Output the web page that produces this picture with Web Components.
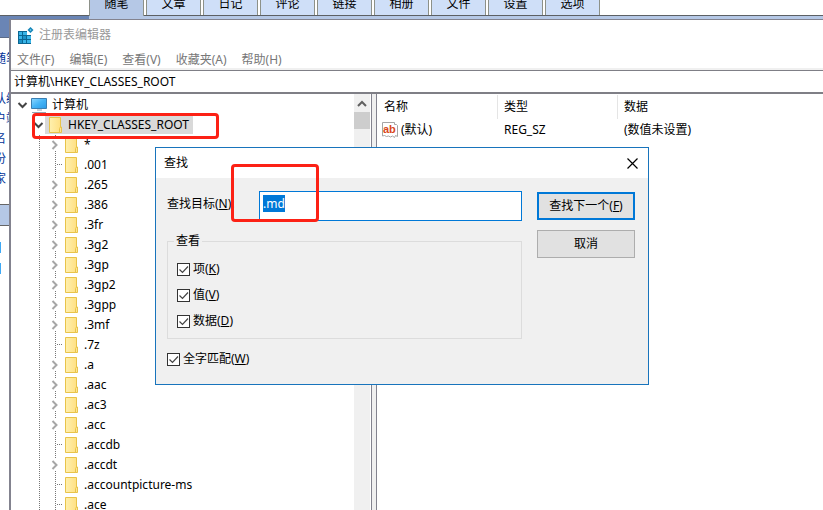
<!DOCTYPE html>
<html lang="zh-CN">
<head>
<meta charset="utf-8">
<title>注册表编辑器</title>
<style>
    html, body {
        height: 100%;
    }
    body {
        margin: 0;
        position: relative;
        overflow: hidden;
        background: #fff;
        color: #000;
        font: 12px/20px "Noto Sans", "Noto Sans CJK SC", sans-serif;
    }
</style>
</head>
<body>
<blog-page></blog-page>
<registry-window></registry-window>
<find-dialog></find-dialog>

<script>
const escapeHtml = (text) => text.replace(/&/g, '&amp;').replace(/</g, '&lt;');

class BlogPage extends HTMLElement {
    constructor() {
        super();
        this.attachShadow({ mode: 'open' });
    }

    connectedCallback() {
        const tabs = ['随笔', '文章', '日记', '评论', '链接', '相册', '文件', '设置', '选项'];
        const links = ['随笔', '', '认编', '户端', '名', '份', '家'];
        this.shadowRoot.innerHTML = `
            <style>
                :host {
                    display: block;
                    height: 100%;
                }
                nav {
                    display: flex;
                    gap: 2px;
                    height: 15px;
                    padding-left: 89px;
                    border-bottom: 1px solid #5c6064;
                }
                nav a {
                    box-sizing: border-box;
                    width: 55px;
                    height: 15px;
                    line-height: 8px;
                    text-align: center;
                    color: #000;
                    text-decoration: none;
                    background: #cfdff8;
                    border: solid #8d9189;
                    border-width: 0 1px;
                }
                nav a.active {
                    height: 16px;
                    background: #b5c8e6;
                }
                .band {
                    height: 21px;
                    background: linear-gradient(to right, #6a85b5 89px, #b5c8e6 89px);
                    border-bottom: 1px solid #5c6b88;
                }
                aside {
                    width: 10px;
                    overflow: hidden;
                }
                ul {
                    list-style: none;
                    margin: 0;
                    padding: 11px 0 15px;
                }
                li {
                    height: 20px;
                    text-indent: -6px;
                    white-space: nowrap;
                }
                li a {
                    color: #039;
                    text-decoration: none;
                }
                .heading {
                    height: 20px;
                    background: #b5c8e6;
                    border: solid #666;
                    border-width: 1px 0;
                }
                .mark {
                    width: 1px;
                    height: 11px;
                    margin-top: 10px;
                    background: #3fa9f5;
                }
                .heading + .mark {
                    margin-top: 16px;
                }
            </style>
            <nav>${tabs.map((t, i) => `<a href="#"${i === 0 ? ' class="active"' : ''}>${t}</a>`).join('')}</nav>
            <div class="band"></div>
            <aside>
                <ul>${links.map((t) => `<li>${t ? `<a href="#">${t}</a>` : ''}</li>`).join('')}</ul>
                <div class="heading"></div>
                <div class="mark"></div>
                <div class="mark"></div>
            </aside>
        `;
    }
}

class TreeItem extends HTMLElement {
    constructor() {
        super();
        this.attachShadow({ mode: 'open' });
    }

    connectedCallback() {
        const state = this.getAttribute('state');
        const computer = this.getAttribute('icon') === 'computer';
        // closed arrows blank out the dotted guide line behind them
        const arrows = {
            open: '<svg width="12" height="20"><path d="M1.500 8l4 4 4-4" fill="none" stroke="#444" stroke-width="2"/></svg>',
            closed: '<svg width="12" height="20"><path d="M2 3h9v13H2z" fill="#fff"/><path d="M3.500 6l4 4-4 4" fill="none" stroke="#a6a6a6" stroke-width="2"/></svg>',
            leaf: '<svg width="16" height="20" shape-rendering="crispEdges"><path d="M8 9.500h6" fill="none" stroke="#777" stroke-dasharray="1 1"/></svg>'
        };
        const folder = `
            <svg width="19" height="20">
                <defs><linearGradient id="f"><stop stop-color="#fff0ae"/><stop offset="1" stop-color="#ffe083"/></linearGradient></defs>
                <path d="M4.500 2.500h11v15h-11z" fill="url(#f)" stroke="#e8c34a"/>
                <path d="M14.500 17.500v-4l1-1.500h1v5.500z" fill="#ffe595" stroke="#e8c34a"/>
            </svg>`;
        const monitor = `
            <svg width="19" height="20">
                <defs><linearGradient id="m" x2="1" y2="1"><stop stop-color="#8fd8ff"/><stop offset=".5" stop-color="#45b4f6"/><stop offset="1" stop-color="#2a9ae6"/></linearGradient></defs>
                <path d="M2.500 3.500h15v10h-15z" fill="url(#m)" stroke="#3b7fb2"/>
                <path d="M8 14h5v2H8z" fill="#c9d3da"/>
                <path d="M3 17.500h14" stroke="#93a5b3"/>
            </svg>`;
        this.shadowRoot.innerHTML = `
            <style>
                :host {
                    display: block;
                    flex: none;
                    height: 20px;
                    padding-left: var(--indent, 0);
                    white-space: nowrap;
                }
                .row {
                    display: flex;
                    height: 20px;
                }
                .arrow {
                    width: 12px;
                }
                svg {
                    display: block;
                    overflow: visible;
                }
                .icon {
                    width: 19px;
                }
                .label {
                    padding: 0 4px;
                }
                .cell {
                    display: flex;
                    height: 19px;
                }
                :host([selected]) .cell {
                    background: #d9d9d9;
                }
            </style>
            <div class="row">
                <span class="arrow">${arrows[state]}</span>
                <span class="cell">
                    <span class="icon">${computer ? monitor : folder}</span>
                    <span class="label"><slot></slot></span>
                </span>
            </div>
        `;
    }
}

class RegistryWindow extends HTMLElement {
    constructor() {
        super();
        this.attachShadow({ mode: 'open' });
    }

    connectedCallback() {
        const menus = ['文件(F)', '编辑(E)', '查看(V)', '收藏夹(A)', '帮助(H)'];
        const keys = ['*', '.001', '.265', '.386', '.3fr', '.3g2', '.3gp', '.3gp2', '.3gpp', '.3mf', '.7z',
            '.a', '.aac', '.ac3', '.acc', '.accdb', '.accdt', '.accountpicture-ms', '.ace'];
        const leaves = ['.001', '.7z', '.accdb', '.accountpicture-ms', '.ace'];
        this.shadowRoot.innerHTML = `
            <style>
                :host {
                    position: absolute;
                    inset: 19px 0 0 9px;
                    display: flex;
                    flex-direction: column;
                    background: #fff;
                    border: solid #83838f;
                    border-width: 1px 0 0 2px;
                }
                header {
                    display: flex;
                    align-items: center;
                    gap: 5px;
                    height: 30px;
                    padding-left: 6px;
                    color: #999;
                }
                menu {
                    display: flex;
                    gap: 7px;
                    height: 18px;
                    margin: 0;
                    padding: 0 2px;
                    border-bottom: 2px solid #f0f0f0;
                }
                menu button {
                    padding: 0 4px;
                    border: 0;
                    background: none;
                    color: #777;
                    font: inherit;
                    line-height: 20px;
                }
                .address {
                    display: block;
                    box-sizing: border-box;
                    width: 100%;
                    height: 24px;
                    padding: 0 3px 2px;
                    border: solid #7f7f86;
                    border-width: 1px 0 2px;
                    outline: 0;
                    font: inherit;
                    color: inherit;
                }
                .panes {
                    flex: 1;
                    display: flex;
                    min-height: 0;
                }
                .tree {
                    box-sizing: border-box;
                    position: relative;
                    display: flex;
                    flex-direction: column;
                    width: 343px;
                    padding-top: 1px;
                    overflow: hidden;
                }
                .root {
                    --indent: 6px;
                }
                .hive {
                    --indent: 22px;
                }
                .keys {
                    display: flex;
                    flex-direction: column;
                    --indent: 38px;
                    --dots: repeating-linear-gradient(to bottom, #777 0 1px, transparent 1px 2px);
                    background:
                        var(--dots) 28px 0 / 1px 100% no-repeat,
                        var(--dots) 44px 0 / 1px 100% no-repeat;
                }
                .mark {
                    position: absolute;
                    left: 21px;
                    top: 19px;
                    width: 181px;
                    height: 20px;
                    border: 3px solid #fc2115;
                    border-radius: 4px;
                }
                .scrollbar {
                    width: 16px;
                    background: #f0f0f0;
                }
                .scrollbar svg {
                    display: block;
                }
                .thumb {
                    height: 17px;
                    background: #cdcdcd;
                }
                .splitter {
                    width: 4px;
                    margin-left: 1px;
                    background: #f0f0f0;
                    border: solid #83838f;
                    border-width: 0 1px;
                }
                .values {
                    flex: 1;
                    padding-top: 1px;
                }
                table {
                    table-layout: fixed;
                    width: 100%;
                    border-collapse: collapse;
                }
                col.fixed {
                    width: 120px;
                }
                th, td {
                    padding: 0 0 0 7px;
                    text-align: left;
                    font-weight: normal;
                    white-space: nowrap;
                }
                th {
                    height: 24px;
                    background: linear-gradient(#e5e5e5, #e5e5e5) 0 0 / 1px 100% no-repeat;
                }
                th:first-child {
                    background: none;
                }
                td {
                    height: 22px;
                }
                .name {
                    display: flex;
                    align-items: center;
                    gap: 3px;
                    margin-left: -2px;
                }
            </style>
            <header>
                <svg width="17" height="17">
                    <path d="M1 4h9v4h4v9H1z" fill="#0b6793"/>
                    <path d="M2 5h3v3H2zM6 5h4v3H6zM2 9h3v3H2zM10 9h4v3h-4zM6 13h3v3H6zM10 13h4v3h-4z" fill="#39b5e8"/>
                    <path d="M6 9h3v3H6zM2 13h3v3H2z" fill="#1c93c8"/>
                    <path d="M13.500 0l3 3-3 3-3-3z" fill="#1584b7"/>
                    <path d="M13.500 2l1 1-1 1-1-1z" fill="#7bd3f3"/>
                </svg>
                <span>注册表编辑器</span>
            </header>
            <menu>${menus.map((m) => `<button type="button">${m}</button>`).join('')}</menu>
            <input class="address" aria-label="地址" value="计算机\\HKEY_CLASSES_ROOT">
            <div class="panes">
                <div class="tree">
                    <tree-item class="root" state="open" icon="computer">计算机</tree-item>
                    <tree-item class="hive" state="open" selected>HKEY_CLASSES_ROOT</tree-item>
                    <div class="keys">
                        ${keys.map((k) => `<tree-item state="${leaves.includes(k) ? 'leaf' : 'closed'}">${escapeHtml(k)}</tree-item>`).join('')}
                    </div>
                    <div class="mark"></div>
                </div>
                <div class="scrollbar">
                    <svg width="16" height="18"><path d="M4 12l4-4 4 4" fill="none" stroke="#606060" stroke-width="2"/></svg>
                    <div class="thumb"></div>
                </div>
                <div class="splitter"></div>
                <div class="values">
                    <table>
                        <colgroup><col class="fixed"><col class="fixed"><col></colgroup>
                        <thead><tr><th>名称</th><th>类型</th><th>数据</th></tr></thead>
                        <tbody><tr>
                            <td><span class="name">
                                <svg width="16" height="16">
                                    <path d="M.5.5h12v2h2l1 1v11l-2-1-1 2-2-1.500-2 1-2-1-2 .5-2-1-2 .5z" fill="#fff" stroke="#a5a5a5"/>
                                    <text x="1" y="11" font-family="Liberation Sans" font-size="11" font-weight="bold" fill="#d9481c">ab</text>
                                </svg>
                                <span>(默认)</span>
                            </span></td>
                            <td>REG_SZ</td>
                            <td>(数值未设置)</td>
                        </tr></tbody>
                    </table>
                </div>
            </div>
        `;
    }
}

class CheckOption extends HTMLElement {
    constructor() {
        super();
        this.attachShadow({ mode: 'open' });
    }

    connectedCallback() {
        this.shadowRoot.innerHTML = `
            <style>
                :host {
                    display: block;
                    height: 20px;
                }
                label {
                    display: flex;
                    align-items: center;
                    gap: 3px;
                }
                .box {
                    display: grid;
                }
                .box > * {
                    grid-area: 1 / 1;
                }
                input {
                    appearance: none;
                    width: 13px;
                    height: 13px;
                    margin: 0;
                    background: #fff;
                    border: 1px solid #333;
                }
                svg {
                    pointer-events: none;
                    visibility: hidden;
                }
                input:checked + svg {
                    visibility: visible;
                }
            </style>
            <label>
                <span class="box">
                    <input type="checkbox" checked>
                    <svg width="13" height="13"><path d="M2.500 6.500l3 3 5.500-6" fill="none" stroke="#444" stroke-width="1.200"/></svg>
                </span>
                <span><slot></slot></span>
            </label>
        `;
    }
}

class FindDialog extends HTMLElement {
    constructor() {
        super();
        this.attachShadow({ mode: 'open' });
    }

    connectedCallback() {
        this.render();
        const input = this.shadowRoot.getElementById('target');
        input.focus();
        input.select();
    }

    render() {
        this.shadowRoot.innerHTML = `
            <style>
                :host {
                    position: absolute;
                    left: 155px;
                    top: 147px;
                    width: 492px;
                    background: #f0f0f0;
                    border: 1px solid #1874bc;
                }
                header {
                    display: flex;
                    align-items: center;
                    justify-content: space-between;
                    height: 30px;
                    padding: 0 10px 0 8px;
                    background: #fff;
                }
                .close {
                    padding: 0;
                    border: 0;
                    background: none;
                    line-height: 0;
                }
                form {
                    display: flex;
                    gap: 15px;
                    padding: 13px 13px 15px 11px;
                }
                .fields {
                    flex: 1;
                }
                .target {
                    display: flex;
                    align-items: center;
                    height: 30px;
                    margin-bottom: 12px;
                }
                .target label {
                    width: 92px;
                    padding-bottom: 4px;
                }
                .target input {
                    flex: 1;
                    box-sizing: border-box;
                    min-width: 0;
                    height: 30px;
                    padding: 0 3px 6px;
                    border: 1px solid #0078d7;
                    outline: 0;
                    background: #fff;
                    color: inherit;
                    font: inherit;
                }
                .target input::selection {
                    background: #0078d7;
                    color: #fff;
                }
                fieldset {
                    display: flex;
                    flex-direction: column;
                    gap: 6px;
                    margin: 0 0 10px;
                    padding: 10px 9px 7px;
                    border: 1px solid #dcdcdc;
                }
                legend {
                    height: 16px;
                    padding: 0 2px;
                    line-height: 16px;
                    margin-left: -3px;
                }
                .buttons {
                    display: flex;
                    flex-direction: column;
                    gap: 10px;
                    width: 98px;
                    padding-top: 1px;
                }
                .buttons button {
                    box-sizing: border-box;
                    height: 28px;
                    padding: 0;
                    border: 1px solid #adadad;
                    background: #e1e1e1;
                    color: inherit;
                    font: inherit;
                }
                .buttons .default {
                    border: 2px solid #0078d7;
                }
                .mark {
                    position: absolute;
                    left: 75px;
                    top: 16px;
                    width: 82px;
                    height: 52px;
                    border: 3px solid #fc2115;
                    border-radius: 4px;
                    pointer-events: none;
                }
            </style>
            <header>
                <span>查找</span>
                <button class="close" type="button" aria-label="关闭">
                    <svg width="11" height="11"><path d="M.5.5l10 10M10.500.5l-10 10" stroke="#000" stroke-width="1.200"/></svg>
                </button>
            </header>
            <form>
                <div class="fields">
                    <div class="target">
                        <label for="target">查找目标(<u>N</u>):</label>
                        <input id="target" type="text" value=".md">
                    </div>
                    <fieldset>
                        <legend>查看</legend>
                        <check-option>项(<u>K</u>)</check-option>
                        <check-option>值(<u>V</u>)</check-option>
                        <check-option>数据(<u>D</u>)</check-option>
                    </fieldset>
                    <check-option>全字匹配(<u>W</u>)</check-option>
                </div>
                <div class="buttons">
                    <button class="default" type="button">查找下一个(<u>F</u>)</button>
                    <button type="button">取消</button>
                </div>
            </form>
            <div class="mark"></div>
        `;
    }
}

customElements.define('blog-page', BlogPage);
customElements.define('tree-item', TreeItem);
customElements.define('registry-window', RegistryWindow);
customElements.define('check-option', CheckOption);
customElements.define('find-dialog', FindDialog);
</script>
</body>
</html>
